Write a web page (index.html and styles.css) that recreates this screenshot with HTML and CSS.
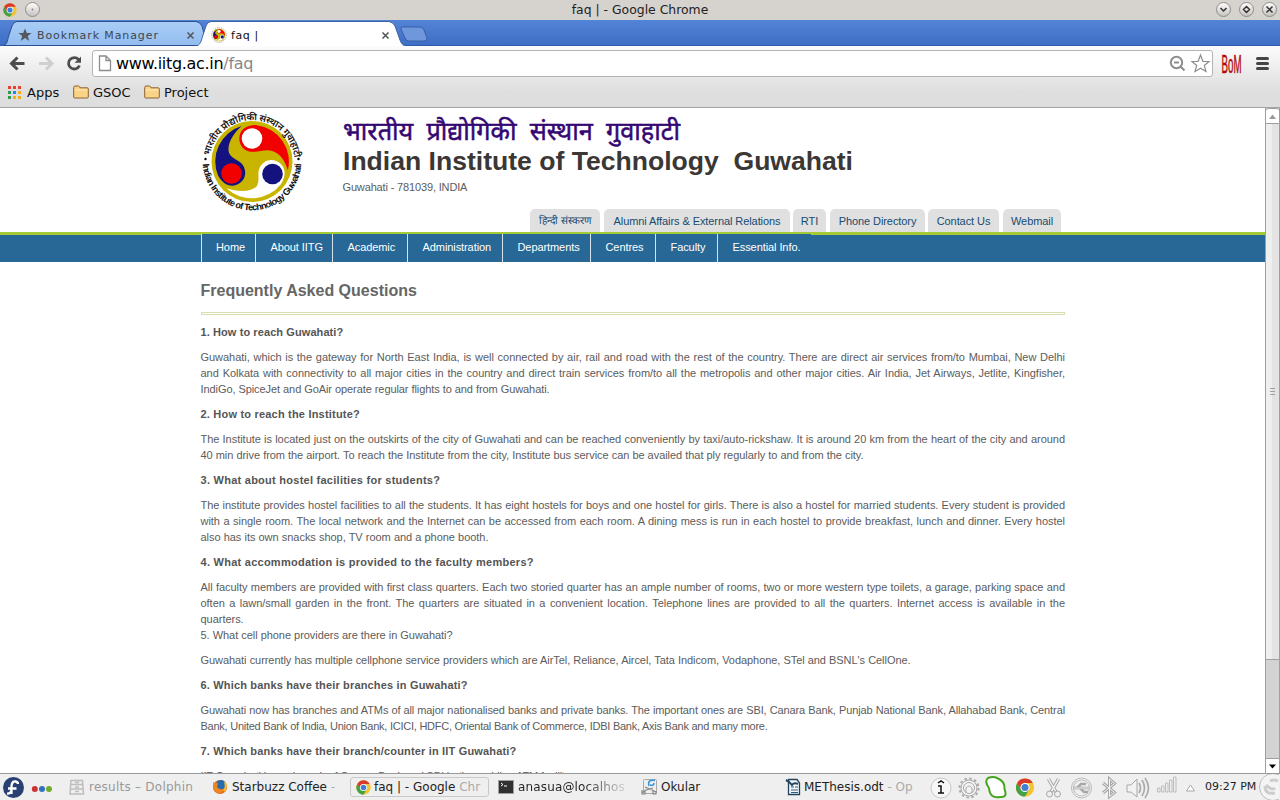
FILE: index.html
```
<!DOCTYPE html>
<html lang="en">
<head>
<meta charset="utf-8">
<title>faq |</title>
<link rel="stylesheet" href="styles.css">
</head>
<body>
<svg class="defs" width="0" height="0">
  <defs>
    <symbol id="chrome" viewBox="-10 -10 20 20">
      <circle r="9.6" fill="#f4c430"/>
      <path d="M-8.3-4.8A9.6 9.6 0 0 1 8.3-4.8L0-4.8L-4.2 2.4Z" fill="#d93a2b"/>
      <path d="M-8.3-4.8A9.6 9.6 0 0 0 0 9.6L4.2 2.4L-4.2 2.4Z" fill="#43a047"/>
      <circle r="4.8" fill="#fff"/><circle r="3.7" fill="#3f7fd6"/>
    </symbol>
    <symbol id="emblem" viewBox="-41 -41 82 82">
      <circle r="40.5" fill="#c9b400"/>
      <g transform="scale(.97)">
        <path fill="#f20000" d="M37 9A38 38 0 0 0 5-37.5C-6-38-14-32-13-22C-12-14-6-10 1-10C8-10 14-13 20-11C30-8 34 0 37 9Z"/>
        <path fill="#14127f" transform="rotate(-120)" d="M37 9A38 38 0 0 0 5-37.5C-6-38-14-32-13-22C-12-14-6-10 1-10C8-10 12-17 20-16C30-13 35 0 37 9Z"/>
        <path fill="#fff" transform="rotate(120)" d="M37 9A38 38 0 0 0 5-37.5C-6-38-14-32-13-22C-12-14-6-10 1-10C8-10 12-17 20-17C30-14 35 0 37 9Z"/>
      </g>
      <circle cx="0" cy="-23" r="10.3" fill="#fff"/>
      <circle cx="-20.5" cy="12" r="10.3" fill="#f20000"/>
      <circle cx="20.5" cy="12.5" r="10.3" fill="#14127f"/>
    </symbol>
    <symbol id="folder" viewBox="0 0 16 14">
      <path d="M.7 12V2.5Q.7 1 2 1H5.5Q6.5 1 7 2.8H14Q15.3 2.8 15.3 4V12Q15.3 13 14.3 13H1.7Q.7 13 .7 12Z" fill="#fbd386" stroke="#8b6235"/>
      <path d="M1.5 5H14.5" stroke="#ffeab9"/>
    </symbol>
    <linearGradient id="knob" x1="0" y1="0" x2="0" y2="1"><stop offset="0" stop-color="#fff"/><stop offset="1" stop-color="#c4c1bd"/></linearGradient>
    <linearGradient id="idle" x1="0" y1="0" x2="0" y2="1"><stop offset="0" stop-color="#a9cdf5"/><stop offset="1" stop-color="#93bdf0"/></linearGradient>
  </defs>
</svg>

<div class="screen">
  <header class="titlebar">
    <svg class="title-left" width="44" height="20"><use href="#chrome" x="3" y="3" width="14" height="14"/><circle cx="32.500" cy="9.500" r="7" fill="url(#knob)" stroke="#8f8c88"/><circle cx="32.500" cy="9.500" r="1" fill="#888"/></svg>
    <span class="title-text">faq | - Google Chrome</span>
    <svg class="title-right" width="70" height="20" fill="none">
      <g fill="url(#knob)" stroke="#8f8c88"><circle cx="13.500" cy="9.500" r="7"/><circle cx="36.500" cy="9.500" r="7"/><circle cx="59.500" cy="9.500" r="7"/></g>
      <path d="M10.500 8L13.500 11L16.500 8M36.500 6.500L39.500 9.500L36.500 12.500L33.500 9.500ZM56.500 6.500L62.500 12.500M62.500 6.500L56.500 12.500" stroke="#333" stroke-width="1.500"/>
    </svg>
  </header>

  <div class="tabstrip">
    <svg class="tab-shapes" width="440" height="26">
      <path d="M3 25.500C7 25 7 22 9 15L12 6Q13 2 17 1.500H196Q200 2 202 6L207 25.500Z" fill="url(#idle)" stroke="#2b5193"/>
      <path d="M195 26.500C201 25 201 21 203 15L206 6Q207 2 211 1.500H389Q393 2 395 6L400 20Q402 26 407 26.500Z" fill="#fff" stroke="#3b62a5"/>
      <path d="M402 7H420Q423 7 424 10L427 18Q427.500 21 424 21H409Q406 21 405 18L401 9Q401 7 402 7Z" fill="#6f98dc" stroke="#365fa9"/>
    </svg>
    <div class="tabs">
      <div class="tab tab-idle"><svg width="14" height="14" viewBox="0 0 14 14"><path d="M7 .5L8.800 5H13.600L9.800 8L11.200 13L7 10L2.800 13L4.200 8L.4 5H5.200Z" fill="#53585f"/></svg><span>Bookmark Manager</span></div>
      <svg class="close" width="9" height="9"><path d="M1.500 1.500L7.500 7.500M7.500 1.500L1.500 7.500" stroke="#53585f" stroke-width="1.600"/></svg>
      <div class="tab tab-live"><svg width="16" height="16"><circle cx="8" cy="8" r="7.300" fill="#fff" stroke="#999" stroke-dasharray="1 1"/><use href="#emblem" x="1.500" y="1.500" width="13" height="13"/></svg><span>faq |</span></div>
      <svg class="close" width="9" height="9"><path d="M1.500 1.500L7.500 7.500M7.500 1.500L1.500 7.500" stroke="#53585f" stroke-width="1.600"/></svg>
    </div>
  </div>

  <div class="toolbar">
    <div class="address-row">
      <svg class="nav-icons" width="92" height="34" fill="none">
        <path d="M17.500 11.500L11.500 17.500L17.500 23.500M12 17.500H24.500" stroke="#4d4d4d" stroke-width="3"/>
        <path d="M46 11.500L52 17.500L46 23.500M51.500 17.500H39" stroke="#cfcfcf" stroke-width="3"/>
        <path d="M78.500 13.500A5.700 5.700 0 1 0 79.500 19.500" stroke="#4d4d4d" stroke-width="2.800"/><path d="M81 10.500V16.800H74.500Z" fill="#4d4d4d"/>
      </svg>
      <div class="address">
        <svg width="14" height="17" fill="#fff" stroke="#8c8c8c" stroke-width="1.300"><path d="M1.500 1H8L12.500 5.500V15.500H1.500ZM8 1V5.500H12.500"/></svg>
        <span class="url">www.iitg.ac.in<i>/faq</i></span>
        <svg class="address-icons" width="44" height="22" fill="none" stroke="#8e8e8e"><circle cx="8.500" cy="9.500" r="5.700" stroke-width="2"/><path d="M6 9.500H11M12.500 13.500L16.500 17.500" stroke-width="2"/><path d="M32.500 2L34.900 8.300L41 8.500L36.300 12.500L38 18.500L32.500 15.200L27 18.500L28.700 12.500L24 8.500L30.100 8.300Z" stroke-width="1.200"/></svg>
      </div>
      <svg class="extras" width="67" height="34"><text x="8.500" y="26.500" class="bom" textLength="20" lengthAdjust="spacingAndGlyphs">BoM</text><path d="M44.500 12.500H54.500M44.500 17.500H54.500M44.500 22.500H54.500" stroke="#454545" stroke-width="3" stroke-linecap="round"/></svg>
    </div>
    <div class="bookmarks">
      <svg class="apps" width="13" height="13"><path d="M0 0h3v3h-3zM5 0h3v3h-3zM10 0h3v3h-3z" fill="#e8412f"/><path d="M0 5h3v3h-3zM0 10h3v3h-3z" fill="#2f9a50"/><path d="M5 5h3v3h-3z" fill="#2386f5"/><path d="M10 5h3v3h-3zM5 10h3v3h-3zM10 10h3v3h-3z" fill="#f4ad16"/></svg>
      <span class="bm-apps">Apps</span>
      <svg width="16" height="14"><use href="#folder"/></svg><span class="bm-gsoc">GSOC</span>
      <svg width="16" height="14"><use href="#folder"/></svg><span>Project</span>
    </div>
  </div>

  <div class="viewport">
    <main class="page">
      <div class="banner">
        <svg class="logo" width="102" height="104" viewBox="-51 -52 102 104">
          <defs>
            <path id="arc-top" d="M-42.800 2A42.800 42.800 0 0 1 42.800 2"/>
            <path id="arc-bottom" d="M-49.300 0A49.300 49.300 0 0 0 49.300 0"/>
          </defs>
          <use href="#emblem" x="-41" y="-40.500" width="82" height="82"/>
          <text class="ring-hindi"><textPath href="#arc-top" startOffset="7" textLength="122">भारतीय प्रौद्योगिकी संस्थान गुवाहाटी</textPath></text>
          <text class="ring-latin"><textPath href="#arc-bottom" startOffset="3" textLength="149">Indian Institute of Technology Guwahati</textPath></text>
          <circle cx="-46.500" cy="-2" r="1.200"/><circle cx="46.500" cy="-2" r="1.200"/>
        </svg>
        <div class="names">
          <svg width="520" height="66">
            <text class="name-hindi" x="0" y="31" textLength="337" lengthAdjust="spacingAndGlyphs" xml:space="preserve">भारतीय  प्रौद्योगिकी  संस्थान  गुवाहाटी</text>
            <text class="name-latin" x="0" y="60.500" textLength="510" lengthAdjust="spacingAndGlyphs" xml:space="preserve">Indian Institute of Technology  Guwahati</text>
          </svg>
          <p class="place">Guwahati - 781039, INDIA</p>
        </div>
      </div>
      <div class="links">
        <a class="l1">हिन्दी संस्करण</a><a class="l2">Alumni Affairs &amp; External Relations</a><a class="l3">RTI</a><a class="l4">Phone Directory</a><a class="l5">Contact Us</a><a class="l6">Webmail</a>
      </div>
      <nav class="menu">
        <div class="menu-list"><a class="m1">Home</a><a class="m2">About IITG</a><a class="m3">Academic</a><a class="m4">Administration</a><a class="m5">Departments</a><a class="m6">Centres</a><a class="m7">Faculty</a><a class="m8">Essential Info.</a></div>
      </nav>
      <article class="faq">
        <h1>Frequently Asked Questions</h1>
        <div class="rule"></div>
        <h2 class="h-a">1. How to reach Guwahati?</h2>
        <p><span class="full">Guwahati, which is the gateway for North East India, is well connected by air, rail and road with the rest of the country. There are direct air services from/to Mumbai, New Delhi</span><span class="full">and Kolkata with connectivity to all major cities in the country and direct train services from/to all the metropolis and other major cities. Air India, Jet Airways, Jetlite, Kingfisher,</span><span class="w349">IndiGo, SpiceJet and GoAir operate regular flights to and from Guwahati.</span></p>
        <h2>2. How to reach the Institute?</h2>
        <p><span class="full">The Institute is located just on the outskirts of the city of Guwahati and can be reached conveniently by taxi/auto-rickshaw. It is around 20 km from the heart of the city and around</span><span class="w663">40 min drive from the airport. To reach the Institute from the city, Institute bus service can be availed that ply regularly to and from the city.</span></p>
        <h2 class="h-c">3. What about hostel facilities for students?</h2>
        <p><span class="full">The institute provides hostel facilities to all the students. It has eight hostels for boys and one hostel for girls. There is also a hostel for married students. Every student is provided</span><span class="full">with a single room. The local network and the Internet can be accessed from each room. A dining mess is run in each hostel to provide breakfast, lunch and dinner. Every hostel</span><span class="w288">also has its own snacks shop, TV room and a phone booth.</span></p>
        <h2 class="h-c">4. What accommodation is provided to the faculty members?</h2>
        <p><span class="full">All faculty members are provided with first class quarters. Each two storied quarter has an ample number of rooms, two or more western type toilets, a garage, parking space and</span><span class="full">often a lawn/small garden in the front. The quarters are situated in a convenient location. Telephone lines are provided to all the quarters. Internet access is available in the</span><span>quarters.</span><span class="w252">5. What cell phone providers are there in Guwahati?</span></p>
        <p><span class="w710">Guwahati currently has multiple cellphone service providers which are AirTel, Reliance, Aircel, Tata Indicom, Vodaphone, STel and BSNL's CellOne.</span></p>
        <h2 class="h-b">6. Which banks have their branches in Guwahati?</h2>
        <p><span class="full tight">Guwahati now has branches and ATMs of all major nationalised banks and private banks. The important ones are SBI, Canara Bank, Punjab National Bank, Allahabad Bank, Central</span><span class="w567">Bank, United Bank of India, Union Bank, ICICI, HDFC, Oriental Bank of Commerce, IDBI Bank, Axis Bank and many more.</span></p>
        <h2 class="h-b">7. Which banks have their branch/counter in IIT Guwahati?</h2>
        <p><span class="w370">IIT Guwahati has a branch of Canara Bank and SBI both providing ATM facility.</span></p>
      </article>
    </main>
    <div class="scrollbar">
      <svg class="sb-up" width="15" height="15"><path d="M3 10L6.500 5.500L10 10Z" fill="#999"/></svg>
      <div class="thumb"><i></i><i></i><i></i></div>
      <div class="track"></div>
      <svg class="sb-down" width="15" height="15"><path d="M3 5.500H10L6.500 9.500Z" fill="#000"/></svg>
    </div>
  </div>

  <footer class="taskbar">
    <svg class="launch" width="66" height="26"><circle cx="13.500" cy="13.500" r="10.500" fill="#294172"/><path d="M11.500 20V12Q12 7 15.500 7.500Q18 8 18 10M8 14.500H16.500M11.500 16Q11 20 7 19.500" stroke="#fff" stroke-width="2.300" fill="none"/><circle cx="34.800" cy="15" r="3" fill="#c33"/><circle cx="42" cy="15" r="3" fill="#3570bd"/><circle cx="49" cy="15" r="3" fill="#70ad2c"/></svg>
    <div class="task t1 faded"><svg width="20" height="18" fill="none" stroke="#bdbdbd" stroke-width="1.500"><path d="M2 2.500H13.500L14.500 16H1ZM2 6.500H14M1.500 11H14M6 4.500H10M6 9H10M6 13.500H10"/></svg><span>results – Dolphin</span></div>
    <div class="task t2"><svg width="20" height="18"><circle cx="8" cy="9" r="7" fill="#e66a1b"/><circle cx="9" cy="7" r="5" fill="#276cae"/><path d="M1 4Q3 6 6 5L5 9Q8 13 13 10Q11 15 6 15Q1 13 1 4Z" fill="#ef861f"/><path d="M13 4Q15 9 12 13" stroke="#f7be33" stroke-width="2" fill="none"/></svg><span>Starbuzz Coffee <i>-</i></span></div>
    <div class="task t3"><svg width="18" height="18"><use href="#chrome" x="0" y="2" width="15" height="15"/></svg><span>faq | - Google <i>Chr</i></span></div>
    <div class="task t4"><svg width="20" height="18"><rect x=".5" y="2.500" width="15" height="13" fill="#303030" stroke="#a0a0a0"/><path d="M3 5L5 6.500L3 8M6 8H9" stroke="#fff" fill="none"/></svg><span class="fade-end">anasua@localhos</span></div>
    <div class="task t5"><svg width="20" height="18" fill="none"><rect x="2.500" y="1.500" width="13" height="14" rx="1" fill="#eee" stroke="#aaa"/><path d="M14 2.500Q6 1 8 8M9 7Q13 8 13 5" stroke="#3694d8" stroke-width="1.500"/><path d="M4 9L11 12L15 14M12 10L5 12L1 15M1 12V16H4V13M12 12V16H15V13" stroke="#888" stroke-width="1.200"/></svg><span>Okular</span></div>
    <div class="task t6"><svg width="19" height="18" fill="none"><path d="M3.500 1.500H12L14.500 5V16.500H3.500Z" fill="#f5f8fa" stroke="#22435c" stroke-width="1.300"/><path d="M6 9H9M6 12H13M6 14.500H13M10 9H13" stroke="#315f83"/><path d="M1 2Q5 4 7 7Q9 4 13 6" stroke="#244660" stroke-width="2"/></svg><span>METhesis.odt <i>- Op</i></span></div>
    <svg class="tray" width="280" height="26" fill="none" stroke="#a8a8a8">
      <circle cx="17" cy="14" r="10" fill="#f7f7f7" stroke="#c8c8c8"/><path d="M14 12H17V19M14 19H20M14 9L17 7L20 9" stroke="#111" stroke-width="1.500"/>
      <circle cx="45" cy="14" r="9.500" stroke-width="2" stroke-dasharray="2.500 2.470"/><circle cx="45" cy="14" r="8" fill="#f4f4f4"/><circle cx="45" cy="14" r="5.500"/><path d="M42 19V14Q45 10 48 14V19"/>
      <path d="M64 4Q69 2 73 4Q81 7 80.500 15Q84 24 76 23Q66 25 65 14Q60 7 64 4Z" fill="#fff" stroke="#46a51c" stroke-width="2"/>
      <g stroke="none"><use href="#chrome" x="91.500" y="4" width="19" height="19"/></g>
      <path d="M124.500 5L132 18M134.500 5L127 18" stroke-width="3.500"/><path d="M124.500 5L132 18M134.500 5L127 18" stroke="#f4f4f4" stroke-width="1.500"/><circle cx="125.500" cy="20" r="3"/><circle cx="133.500" cy="20" r="3"/>
      <circle cx="157.500" cy="14" r="10" stroke="#bbb"/><circle cx="157.500" cy="14" r="8" stroke="#bbb"/><path d="M150 14H165M153 14L157 10H162M156 14L160 18H164" stroke-width="2.500"/><path d="M150 14H165" stroke="#eee"/>
      <path d="M179 9L190.500 18.500L185.500 22.500V5L190.500 9.500L179 19" stroke-width="3"/><path d="M179 9L190.500 18.500L185.500 22.500V5L190.500 9.500L179 19" stroke="#f4f4f4"/>
      <path d="M203 11H207L213 5V23L207 18H203Z" fill="#f3f3f3"/><path d="M215 9Q218 14 215 19M218 6Q223 14 218 22M221 4Q228 14 221 24" stroke-width="1.600"/>
      <path d="M233.500 14H236V18H233.500ZM237.500 12H240V18H237.500ZM241.500 9H244V18H241.500ZM245.500 6H248V18H245.500ZM249.500 3H252V18H249.500Z" stroke="#bdbdbd"/>
      <path d="M262.500 17L266.500 11L270.500 17Z" fill="#fff"/>
    </svg>
    <span class="clock">09:27 PM</span>
    <svg class="corner" width="21" height="26"><circle cx="15" cy="13" r="13.500" fill="#f4f4f4" stroke="#bbb"/><path d="M7 12Q7 21 17 19M8 11Q14 17 17 14M12 7Q16 5 20 7" fill="none" stroke="#cdcdcd" stroke-width="3"/></svg>
  </footer>
</div>
</body>
</html>
```
FILE: styles.css
```
* { box-sizing: border-box; }
body { margin: 0; overflow: hidden; font-family: "Liberation Sans", sans-serif; }
svg { display: block; flex: none; }
i { font-style: normal; }
.defs { position: absolute; }
.screen { width: 1280px; height: 800px; display: flex; flex-direction: column; overflow: hidden; }

.titlebar { height: 20px; display: flex; justify-content: space-between; background: #d6d2ce; }
.title-left { margin-right: 26px; }
.title-text { font: 12.4px/19px "DejaVu Sans", sans-serif; color: #222; }

.tabstrip { height: 26px; position: relative; background: linear-gradient(#5484d6, #3e6dc6); border-bottom: 1px solid #2f5ba8; }
.tab-shapes { position: absolute; left: 0; top: 0; }
.tabs { position: relative; display: flex; align-items: center; height: 30px; padding-left: 18px; font: 11px "DejaVu Sans", sans-serif; letter-spacing: .9px; }
.tab { display: flex; align-items: center; gap: 5px; }
.tab-idle { width: 168px; color: #41464e; }
.tab-live { width: 170px; margin-left: 16px; gap: 4px; color: #111; letter-spacing: .6px; }

.toolbar { height: 62px; background: linear-gradient(#fcfcfc, #dedede 75%); border-bottom: 1px solid #a4a4a4; }
.address-row { display: flex; height: 34px; }
.address { flex: 1; height: 27px; margin-top: 4px; display: flex; align-items: center; padding-left: 5px; background: #fff; border: 1px solid #b4b4b4; border-radius: 3px; }
.url { flex: 1; padding-left: 4px; font: 16px "DejaVu Sans", sans-serif; color: #000; letter-spacing: -.3px; }
.url i { color: #888; }
.bom { font: 26px "Liberation Sans", sans-serif; fill: #b00c0c; stroke: #b00c0c; stroke-width: .5px; }
.bookmarks { display: flex; align-items: center; height: 24px; padding-left: 8px; font: 13px "DejaVu Sans", sans-serif; color: #111; }
.bm-apps { width: 46px; margin-left: 6px; }
.bm-gsoc { width: 55px; }
.bookmarks svg + span { padding-left: 4px; }
.bookmarks .apps + span { padding-left: 0; }

.viewport { height: 665px; display: flex; overflow: hidden; background: #fff; }
.page { width: 1265px; height: 665px; overflow: hidden; font-size: 11px; color: #5c5c5c; }
.banner { height: 101px; padding: 1px 0 0 201px; display: flex; }
.names { padding-left: 40px; }
.ring-hindi { font: 600 9.5px "Noto Sans", sans-serif; fill: #111; }
.ring-latin { font: bold 9.2px "Liberation Sans", sans-serif; fill: #111; }
.name-hindi { font: 400 25px "Noto Sans", sans-serif; fill: #340773; stroke: #340773; stroke-width: .5px; }
.name-latin { font: bold 25px "Liberation Sans", sans-serif; fill: #3b3735; }
.place { margin: 4px 0 0 -.5px; line-height: 16px; letter-spacing: -.15px; }

.links { height: 23px; padding-left: 530px; display: flex; }
.links a { height: 23px; line-height: 24px; text-align: center; white-space: nowrap; background: #e0e0e0; border-radius: 5px 5px 0 0; color: #174b70; letter-spacing: -.08px; }
.links .l1 { width: 70px; margin-right: 4px; font-size: 10.3px; }
.l2 { width: 186px; margin-right: 3px; }
.l3 { width: 33px; margin-right: 4px; }
.l4 { width: 95px; margin-right: 3px; }
.l5 { width: 71px; margin-right: 4px; }
.l6 { width: 58px; }

.menu { height: 30px; padding-left: 201px; background: linear-gradient(#a4cb35 3px, #276897 3px); display: flex; }
.menu-list { display: flex; height: 28px; margin-top: 2px; background: #276897; color: #fff; }
.menu-list a { padding-left: 14.5px; border-left: 1px solid #d5e3ed; line-height: 27px; white-space: nowrap; letter-spacing: -.08px; }
.menu-list .m1 { width: 54px; padding-left: 14px; }
.m2 { width: 77px; }
.m3 { width: 75px; }
.m4 { width: 95px; }
.m5 { width: 88px; }
.m6 { width: 65px; }
.m7 { width: 62px; }
.m8 { width: 94px; }

.faq { width: 865px; margin-left: 200px; padding: 19px 0 0 .5px; }
h1 { margin: 0; font-size: 16px; line-height: 20px; color: #666; }
.rule { height: 3px; margin: 11px 0 9px .5px; border: 1px solid #d9ddb0; }
h2 { margin: 0 0 9px; font-size: 11px; line-height: 16px; letter-spacing: .2px; color: #555; }
.h-a { letter-spacing: .09px; }
.h-b { letter-spacing: .17px; }
.h-c { letter-spacing: .26px; }
.faq p { margin: 0 0 9px; line-height: 16px; }
.faq p span { display: block; white-space: nowrap; text-align-last: justify; letter-spacing: -.03px; }
.faq p span:not([class]) { text-align-last: left; }
.full { width: 864.5px; }
.faq p .tight { letter-spacing: -.1px; }
.faq p .w349 { width: 349px; letter-spacing: -.08px; }
.faq p .w663 { width: 663px; letter-spacing: -.05px; }
.w288 { width: 288px; }
.faq p .w252 { width: 252px; letter-spacing: -.05px; }
.faq p .w710 { width: 710px; letter-spacing: -.06px; }
.faq p .w567 { width: 567px; letter-spacing: -.26px; }
.faq p .w370 { width: 370px; letter-spacing: -.15px; }

.scrollbar { width: 15px; display: flex; flex-direction: column; border: 1px solid #9f9f9f; border-width: 0 1px; background: #d3d3d3; }
.sb-up, .sb-down { width: 13px; background: #fff; }
.sb-up { border-top: 1px solid #9f9f9f; border-radius: 3px 3px 0 0; }
.sb-down { border-top: 1px solid #9f9f9f; }
.thumb { height: 537px; display: flex; flex-direction: column; align-items: center; justify-content: center; gap: 2px; background: linear-gradient(90deg, #efefef 50%, #e3e3e3 50%); border: 1px solid #9f9f9f; border-width: 1px 0; }
.thumb i { width: 5px; height: 1px; background: #9f9f9f; }
.track { flex: 1; }

.taskbar { height: 27px; display: flex; background: #efefef; border-top: 1px solid #999; font: 12px "DejaVu Sans", sans-serif; color: #222; }
.task { flex: none; display: flex; align-items: center; height: 20px; margin-top: 3px; white-space: nowrap; overflow: hidden; }
.task i { color: #aaa; }
.task.faded { color: #999; letter-spacing: .25px; }
.t1 { width: 146px; padding-left: 3px; }
.t2 { width: 138px; }
.t3 { width: 139px; padding-left: 5px; border: 1px solid #c9c9c9; border-radius: 3px; }
.t4 { width: 143px; padding-left: 9px; letter-spacing: .15px; }
.t5 { width: 153px; padding-left: 9px; }
.t6 { width: 128px; }
.fade-end { background: linear-gradient(90deg, #222 60%, #ccc 98%); background-clip: text; -webkit-background-clip: text; color: transparent; }
.tray { margin-left: 11px; }
.clock { flex: none; width: 54px; padding: 6px 0 0 1px; font-size: 11px; white-space: nowrap; }
```
